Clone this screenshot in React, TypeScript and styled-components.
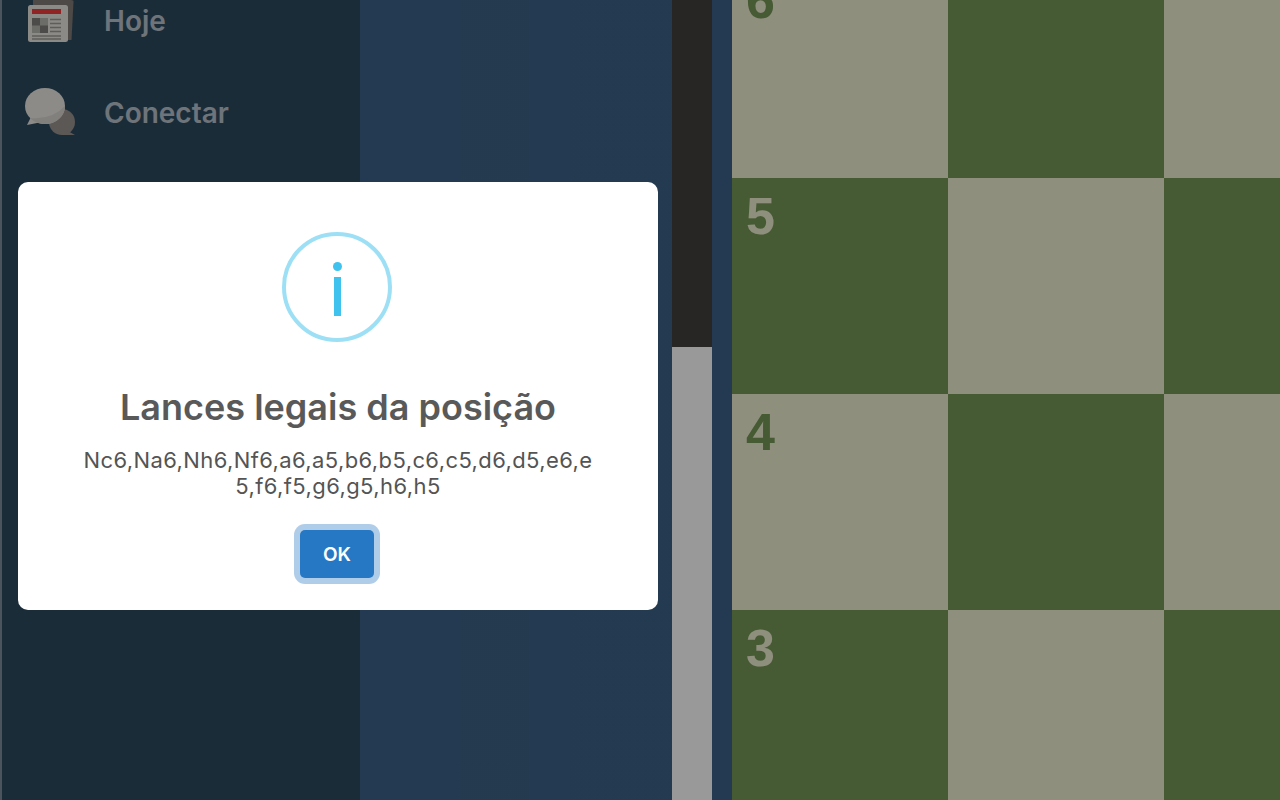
import React from 'react';
import styled, { createGlobalStyle } from 'styled-components';

const Global = createGlobalStyle`
  html, body { margin: 0; padding: 0; height: 100%; overflow: hidden; }
  body { font-family: Inter, "Liberation Sans", sans-serif; background: #3c6289; }
  * { box-sizing: border-box; }
`;

const Page = styled.div`
  display: flex;
  width: 1280px;
  height: 800px;
  overflow: hidden;
`;

const Sidebar = styled.nav`
  width: 360px;
  flex: none;
  background: #2e4a5f;
  border-left: 2px solid #7d8d9b;
`;

const NavList = styled.ul`
  list-style: none;
  margin: -26px 0 0;
  padding: 0 0 0 22px;
`;

const NavRow = styled.li`
  display: flex;
  align-items: center;
  height: 92px;
  gap: 28px;
`;

const NavIcon = styled.svg`
  width: 52px;
  height: 52px;
  flex: none;
`;

const NavLabel = styled.span`
  padding-top: 2px;
  font-size: 28px;
  font-weight: 600;
  color: #b8c2cc;
`;

const Content = styled.main`
  width: 312px;
  flex: none;
  background-color: #3c6289;
  background-image: linear-gradient(90deg,
    transparent 0 100px, rgba(70,100,100,.14) 100px 170px, transparent 170px 210px,
    rgba(70,100,100,.08) 210px 312px);
`;

const ScrollColumn = styled.div`
  width: 40px;
  flex: none;
  display: flex;
  flex-direction: column;
`;

const ScrollTrack = styled.div`
  height: 347px;
  background: #443e3e;
`;

const ScrollThumb = styled.div`
  flex: 1;
  background: #ffffff;
`;

const Gutter = styled.div`
  width: 20px;
  flex: none;
  background: #3c6289;
`;

const Board = styled.section`
  flex: none;
  display: grid;
  grid-template-columns: repeat(3, 216px);
  grid-auto-rows: 216px;
  margin-top: -38px;
`;

const Square = styled.div<{ $dark: boolean }>`
  background: ${p => (p.$dark ? '#769656' : '#eeeed2')};
  color: ${p => (p.$dark ? '#eeeed2' : '#769656')};
  padding: 8px 14px;
  font: 700 52px/60px "Liberation Sans", Arial, sans-serif;
`;

const Overlay = styled.div`
  position: fixed;
  inset: 0;
  background: rgba(0, 0, 0, 0.4);
  display: flex;
  align-items: center;
  justify-content: center;
  padding: 0 604px 8px 0;
`;

const Dialog = styled.div`
  width: 640px;
  flex: none;
  height: 428px;
  background: #fff;
  border-radius: 10px;
  display: flex;
  flex-direction: column;
  align-items: center;
  padding-top: 50px;
`;

const InfoRing = styled.div`
  width: 110px;
  height: 110px;
  margin-right: 2px;
  border-radius: 50%;
  border: 4px solid #9de0f6;
  display: flex;
  flex-direction: column;
  align-items: center;
  padding-top: 26px;
`;

const InfoDot = styled.span`
  width: 9px;
  height: 9px;
  border-radius: 50%;
  background: #3fc3ee;
`;

const InfoStem = styled.span`
  width: 7px;
  height: 39px;
  margin-top: 6px;
  background: #3fc3ee;
`;

const Title = styled.h2`
  margin: 42px 0 0;
  font-size: 36px;
  line-height: 46px;
  font-weight: 600;
  color: #595959;
`;

const Message = styled.p`
  width: 512px;
  margin: 17px 0 0;
  font-size: 22px;
  letter-spacing: 0.4px;
  line-height: 26px;
  font-weight: 400;
  color: #545454;
  text-align: center;
  overflow-wrap: anywhere;
`;

const OkButton = styled.button`
  width: 74px;
  height: 48px;
  margin-top: 31px;
  margin-right: 2px;
  border: 0;
  border-radius: 5px;
  background: #2778c4;
  box-shadow: 0 0 0 6px rgba(39, 120, 196, 0.37);
  color: #fff;
  font-family: inherit;
  font-size: 19px;
  font-weight: 600;
`;

const NewsIcon = () => (
  <NavIcon viewBox="0 0 52 52">
    <path d="M9 6h38q3 0 2.500 2l-2 38H9z" fill="#7f7a75" />
    <rect x="4" y="11" width="40" height="37" rx="2.500" fill="#e9e6df" />
    <rect x="8" y="15" width="29" height="5" fill="#f03c3c" />
    <rect x="8" y="24" width="16" height="15" fill="#b5b4af" />
    <rect x="8" y="24" width="8" height="7.500" fill="#7f7d7a" />
    <rect x="16" y="31.500" width="8" height="7.500" fill="#7f7d7a" />
    <path d="M26 25.500h11M26 29.500h11M26 33.500h11M26 37.500h11M8 42h29M8 45h29" stroke="#9e9c96" strokeWidth="1.500" />
  </NavIcon>
);

const ChatIcon = () => (
  <NavIcon viewBox="0 0 52 52">
    <circle cx="38" cy="36" r="13" fill="#98938e" />
    <path d="M42 44l9 5-14 0z" fill="#98938e" />
    <ellipse cx="21" cy="20" rx="20" ry="18" fill="#e9e8e3" />
    <path d="M7 31l-4 8 15-3z" fill="#e9e8e3" />
    <path d="M41 20a20 18 0 0 1-35 12q22 2 35-12z" fill="#d8d6d1" />
  </NavIcon>
);

const ranks = [6, 5, 4, 3];

export default function App() {
  return (
    <>
      <Global />
      <Page>
        <Sidebar>
          <NavList>
            <NavRow><NewsIcon /><NavLabel>Hoje</NavLabel></NavRow>
            <NavRow><ChatIcon /><NavLabel>Conectar</NavLabel></NavRow>
          </NavList>
        </Sidebar>
        <Content />
        <ScrollColumn>
          <ScrollTrack />
          <ScrollThumb />
        </ScrollColumn>
        <Gutter />
        <Board>
          {ranks.map((rank, r) =>
            [0, 1, 2].map(c => (
              <Square key={`${rank}-${c}`} $dark={(r + c) % 2 === 1}>
                {c === 0 ? rank : null}
              </Square>
            ))
          )}
        </Board>
      </Page>
      <Overlay>
        <Dialog>
          <InfoRing>
            <InfoDot />
            <InfoStem />
          </InfoRing>
          <Title>Lances legais da posição</Title>
          <Message>Nc6,Na6,Nh6,Nf6,a6,a5,b6,b5,c6,c5,d6,d5,e6,e5,f6,f5,g6,g5,h6,h5</Message>
          <OkButton>OK</OkButton>
        </Dialog>
      </Overlay>
    </>
  );
}
